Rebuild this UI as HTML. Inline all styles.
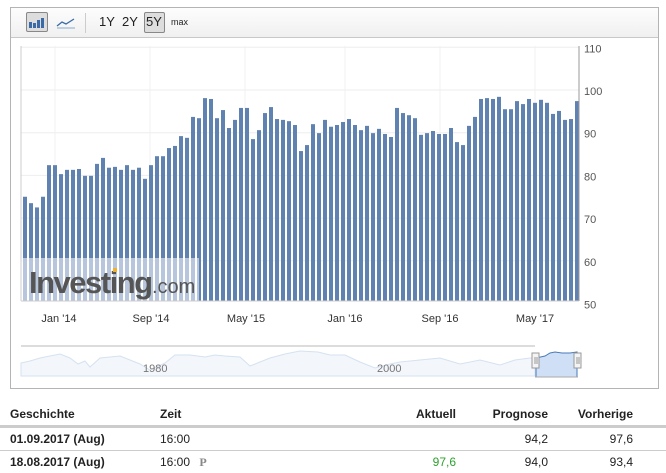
<!DOCTYPE html>
<html><head><meta charset="utf-8"><style>
body{margin:0;width:666px;height:471px;background:#fff;font-family:"Liberation Sans",Arial,sans-serif;position:relative;overflow:hidden}
.box{position:absolute;left:10px;top:7px;width:647px;height:380px;border:1px solid #b4b4b4}
.tb{position:absolute;left:0;top:0;width:647px;height:29px;background:linear-gradient(#fdfdfd,#f0f0f0);border-bottom:1px solid #c8c8c8}
.btn{position:absolute;top:5px;height:18px;font-size:13px;line-height:18px;color:#222}
table{position:absolute;left:0;top:402px;width:666px;border-collapse:collapse;font-size:12px;color:#222;table-layout:fixed}
td,th{padding:0 0 0 10px;height:22px;white-space:nowrap}
th{text-align:left;font-weight:bold;border-bottom:3px solid #ccc;height:23px}
tr.r td{border-bottom:1px solid #ccc}
.rt{text-align:right;padding:0}
</style></head><body>
<div class="box">
<div class="tb">
 <div style="position:absolute;left:15px;top:4px;width:20px;height:18px;border:1px solid #888;border-radius:2px;background:#ddd"></div>
 <svg style="position:absolute;left:17px;top:7px" width="18" height="14"><g fill="#3a6aa8"><rect x="1" y="7" width="3" height="6"/><rect x="5" y="8" width="3" height="5"/><rect x="9" y="5" width="3" height="8"/><rect x="13" y="3" width="3" height="10"/></g></svg>
 <svg style="position:absolute;left:45px;top:7px" width="20" height="14"><polyline points="1,11 6,7 10,9 18,4" fill="none" stroke="#3a6aa8" stroke-width="1.3"/><line x1="1" y1="13" x2="19" y2="13" stroke="#8aaad0"/></svg>
 <div style="position:absolute;left:74px;top:5px;width:1px;height:20px;background:#ccc"></div>
 <div class="btn" style="left:88px">1Y</div>
 <div class="btn" style="left:111px">2Y</div>
 <div style="position:absolute;left:133px;top:4px;width:19px;height:19px;border:1px solid #888;border-radius:2px;background:#ddd"></div>
 <div class="btn" style="left:135px">5Y</div>
 <div class="btn" style="left:160px;font-size:9px">max</div>
</div>
</div>
<svg id="c" style="position:absolute;left:0;top:0" width="666" height="400"></svg>
<table>
<colgroup><col style="width:150px"><col style="width:210px"><col style="width:96px"><col style="width:92px"><col style="width:85px"><col style="width:33px"></colgroup>
<tr><th>Geschichte</th><th>Zeit</th><th class="rt">Aktuell</th><th class="rt">Prognose</th><th class="rt">Vorherige</th><th></th></tr>
<tr class="r"><td><b>01.09.2017 (Aug)</b></td><td>16:00</td><td class="rt"></td><td class="rt">94,2</td><td class="rt">97,6</td><td></td></tr>
<tr><td><b>18.08.2017 (Aug)</b></td><td>16:00 <span style="font-family:'Liberation Serif',serif;color:#888;font-weight:bold;margin-left:6px">P</span></td><td class="rt" style="color:#2ea12e">97,6</td><td class="rt">94,0</td><td class="rt">93,4</td><td></td></tr>
</table>
<script>
var v=[75,73.5,72.5,75,82.4,82.4,80.3,81.3,81.3,81.5,79.9,79.9,82.7,84.1,81.8,82,81.3,82.4,81.3,81.8,79.2,82.4,84.5,84.5,86.4,86.9,89.2,88.8,93.7,93.4,98.1,97.9,93.4,95.3,91.1,93,95.8,95.8,88.5,90.6,94.6,96,93.2,93,92.7,91.8,85.7,87.1,92,89.9,93,91.4,91.8,92.5,93.2,91.8,90.6,91.6,89.9,90.9,89.7,89,95.8,94.6,94.1,93.4,89.5,89.9,90.4,89.7,89.7,91.1,87.8,87.1,91.6,93.7,97.9,98.1,97.9,98.4,95.5,95.5,97.4,96.7,97.9,97,97.7,97,94.4,95.1,93,93.2,97.4];
function Y(x){return 90+(100-x)*4.27}
var s='';
[110,100,90,80,70,60].forEach(function(t){s+='<line x1="21" x2="579" y1="'+Y(t)+'" y2="'+Y(t)+'" stroke="#eee"/>';});
[55,150,245,345,440,535].forEach(function(x){s+='<line x1="'+x+'" x2="'+x+'" y1="46" y2="301" stroke="#f0f0f0"/>';});
v.forEach(function(a,i){var x=23+6*i,y=Y(a);s+='<rect x="'+x+'" y="'+y+'" width="4" height="'+(301-y)+'" fill="#5f82b1"/>';});
s+='<rect x="21" y="258" width="178" height="43" fill="#fff" opacity="0.55"/>';
s+='<text x="29" y="293" font-size="31" font-weight="bold" fill="#555" letter-spacing="-1.5">Investing</text><text x="152" y="293" font-size="20" fill="#555">.com</text>';
s+='<rect x="113" y="268" width="4" height="4" fill="#f0b030"/>';
s+='<line x1="21" x2="21" y1="46" y2="301" stroke="#ccc"/><line x1="579" x2="579" y1="46" y2="301" stroke="#999"/><line x1="21" x2="579" y1="301" y2="301" stroke="#ccc"/>';
[110,100,90,80,70,60,50].forEach(function(t){s+='<text x="584" y="'+(Y(t)+5)+'" font-size="11" fill="#555">'+t+'</text>';});
[["Jan '14",59],["Sep '14",151],["May '15",246],["Jan '16",345],["Sep '16",440],["May '17",535]].forEach(function(l){s+='<text x="'+l[1]+'" y="322" font-size="11" fill="#333" text-anchor="middle">'+l[0]+'</text>';});
s+='<line x1="21" x2="535" y1="346" y2="346" stroke="#b8b8b8"/>';
s+='<path d="M21,363 L30,361 40,358 50,356 60,354 70,358 78,364 85,361 90,367 100,358 110,357 120,356 130,360 140,364 150,370 165,363 175,355 190,355 205,357 215,355 225,356 240,357 250,366 260,362 270,358 285,354 300,351 318,352 330,355 345,355 360,362 375,368 390,364 400,362 420,360 440,358 460,364 480,360 500,365 515,360 530,358 535,358 L535,376 L21,376Z" fill="#f3f6fb" stroke="#d5e2f0"/>';
s+='<text x="143" y="372" font-size="11" fill="#777">1980</text><text x="377" y="372" font-size="11" fill="#777">2000</text>';
s+='<path d="M536,358 L545,356 550,353 555,352 562,353 570,353 577,352 L577,377 L536,377Z" fill="#cfe0f6" stroke="#4a7ab8"/>';
s+='<line x1="535" x2="578" y1="377" y2="377" stroke="#aaa"/>';
[532,574].forEach(function(x){s+='<rect x="'+x+'" y="353" width="7" height="15" fill="#f4f4f4" stroke="#999"/><line x1="'+(x+3)+'" x2="'+(x+3)+'" y1="357" y2="364" stroke="#999"/><line x1="'+(x+5)+'" x2="'+(x+5)+'" y1="357" y2="364" stroke="#999"/>';});
document.getElementById('c').innerHTML=s;
</script>
</body></html>
